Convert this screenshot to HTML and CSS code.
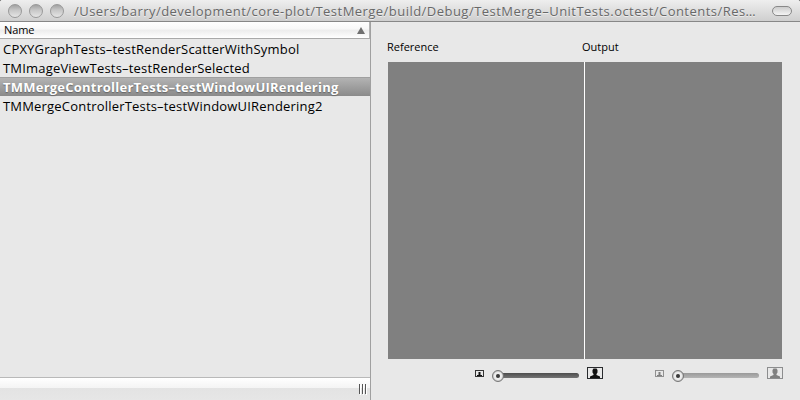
FILE: index.html
```
<!DOCTYPE html>
<html lang="en">
<head>
<meta charset="utf-8">
<title>TestMerge</title>
<link rel="stylesheet" href="styles.css">
</head>
<body>
<svg class="defs" width="0" height="0" aria-hidden="true">
  <symbol id="person" viewBox="0 0 16 12">
    <rect x=".5" y=".5" width="15" height="11" fill="#e8e8e8" stroke="#292b2e"/>
    <path d="M3 11V9.500L6.500 8V7L5.500 5.500V3L6.500 1.500h3l1 1.500V5.500L9.500 7V8L13 9.500V11z" fill="#111"/>
  </symbol>
</svg>
<div class="window">
  <header class="titlebar">
    <div class="lights"><i></i><i></i><i></i></div>
    <div class="title"><span>/Users/barry/development/core-plot/TestMerge/build/Debug/TestMerge–UnitTests.octest/Contents/Res…</span></div>
    <div class="pill"></div>
  </header>
  <main class="content">
    <section class="sidebar">
      <div class="column-head"><span>Name</span><svg width="8" height="7"><path d="M4 0L8 7H0z" fill="#707070"/></svg></div>
      <ul class="rows">
        <li>CPXYGraphTests–testRenderScatterWithSymbol</li>
        <li>TMImageViewTests–testRenderSelected</li>
        <li class="selected">TMMergeControllerTests–testWindowUIRendering</li>
        <li>TMMergeControllerTests–testWindowUIRendering2</li>
      </ul>
      <div class="bottom"><div class="grip"><i></i><i></i><i></i></div></div>
    </section>
    <section class="detail">
      <div class="labels"><span>Reference</span><span>Output</span></div>
      <div class="images"><div></div><div></div></div>
      <div class="sliders">
        <div class="zoom">
          <svg class="small" width="9" height="7"><rect x=".5" y=".5" width="8" height="6" fill="#e8e8e8" stroke="#333"/><path d="M2 6V5h1.500V2h2v3H7v1z" fill="#111"/></svg>
          <div class="slider"><div class="track"></div><div class="knob"></div></div>
          <svg class="big" width="16" height="12"><use href="#person"/></svg>
        </div>
        <div class="zoom disabled">
          <svg class="small" width="9" height="7"><rect x=".5" y=".5" width="8" height="6" fill="#e8e8e8" stroke="#333"/><path d="M2 6V5h1.500V2h2v3H7v1z" fill="#111"/></svg>
          <div class="slider"><div class="track"></div><div class="knob"></div></div>
          <svg class="big" width="16" height="12"><use href="#person"/></svg>
        </div>
      </div>
    </section>
  </main>
</div>
</body>
</html>
```
FILE: styles.css
```
* { box-sizing: border-box; }
body { margin: 0; background: #000; font-family: "Open Sans", "Noto Sans", sans-serif; color: #000; }
.defs { position: absolute; }
.window { width: 800px; height: 400px; display: flex; flex-direction: column; background: #e8e8e8; border-radius: 2px 2px 0 0; overflow: hidden; }
.titlebar { height: 22px; flex: none; display: flex; align-items: center; padding: 0 8px; background: linear-gradient(#eee, #cfcfcf); border-bottom: 1px solid #878787; }
.lights { display: flex; gap: 7px; width: 66px; }
.lights i { width: 14px; height: 14px; border-radius: 50%; border: 1px solid #999; background: linear-gradient(#a2a2a2, #c5c5c5 40%, #e6e6e6); }
.title { flex: 1; font-size: 13px; line-height: 20px; color: #686868; white-space: nowrap; text-shadow: 0 1px 0 #eee; }
.title span { letter-spacing: .465px; }
.pill { width: 20px; height: 10px; border-radius: 5px; border: 1px solid #888; background: linear-gradient(#ccc, #f4f4f4); }
.content { flex: 1; display: flex; min-height: 0; }
.sidebar { width: 371px; display: flex; flex-direction: column; border-right: 1px solid #a0a0a0; }
.column-head { height: 17px; display: flex; align-items: center; justify-content: space-between; padding: 0 4px; font-size: 11px; line-height: 16px; border-bottom: 1px solid #a9a9a9; border-right: 1px solid #b5b5b5; background: linear-gradient(#fff 0, #f8f8f8 45%, #ececec 50%, #fff); }
.column-head span { letter-spacing: -.1px; }
.rows { flex: 1; margin: 0; padding: 0; list-style: none; }
.rows li { height: 19px; padding-left: 3px; font-size: 13px; line-height: 21px; letter-spacing: .19px; white-space: nowrap; }
.rows .selected { color: #fff; font-weight: 700; letter-spacing: .23px; background: linear-gradient(#b3b3b3, #8a8a8a); border-top: 1px solid #a0a0a0; line-height: 19px; text-shadow: 0 1px 1px #666; position: relative; top: -1px; }
.rows .selected { position: static; }
.bottom { height: 23px; display: flex; justify-content: flex-end; padding: 6px 4px 0 0; border-top: 1px solid #b9b9b9; background: linear-gradient(#fff 0, #f4f4f4 10px, #e3e3e3 10px, #e6e6e6 100%); }
.grip { display: flex; gap: 2px; }
.grip i { width: 1px; height: 10px; background: #555; box-shadow: 1px 1px 0 #fff; }
.detail { flex: 1; padding: 17px 0 0 17px; }
.labels { height: 23px; display: grid; grid-template-columns: 195px 1fr; margin-left: -1px; font-size: 11px; line-height: 16px; }
.images { width: 394px; height: 297px; display: flex; gap: 1px; background: #fff; }
.images div { width: 196px; background: #808080; }
.images div + div { width: 197px; }
.sliders { display: flex; gap: 52px; padding: 8px 0 0 87px; }
.zoom { display: flex; width: 128px; height: 18px; }
.zoom svg { flex: none; }
.small { margin-top: 3px; }
.slider { width: 88px; margin: 0 8px 0 7px; position: relative; height: 18px; }
.track { margin: 7px 0 0 4px; height: 5px; border-radius: 3px; background: linear-gradient(#4d4d4d, #747474); }
.slider { display: flow-root; margin-top: -1px; }
.knob { position: absolute; left: 1px; top: 4px; width: 12px; height: 12px; border-radius: 50%; border: 1px solid #777; background: radial-gradient(circle, #333 0, #444 1.500px, #eee 2.500px, #eee 3.500px, #aaa 6px); }
.disabled svg { opacity: .48; }
.disabled .track { background: linear-gradient(#999, #b5b5b5); }
```
